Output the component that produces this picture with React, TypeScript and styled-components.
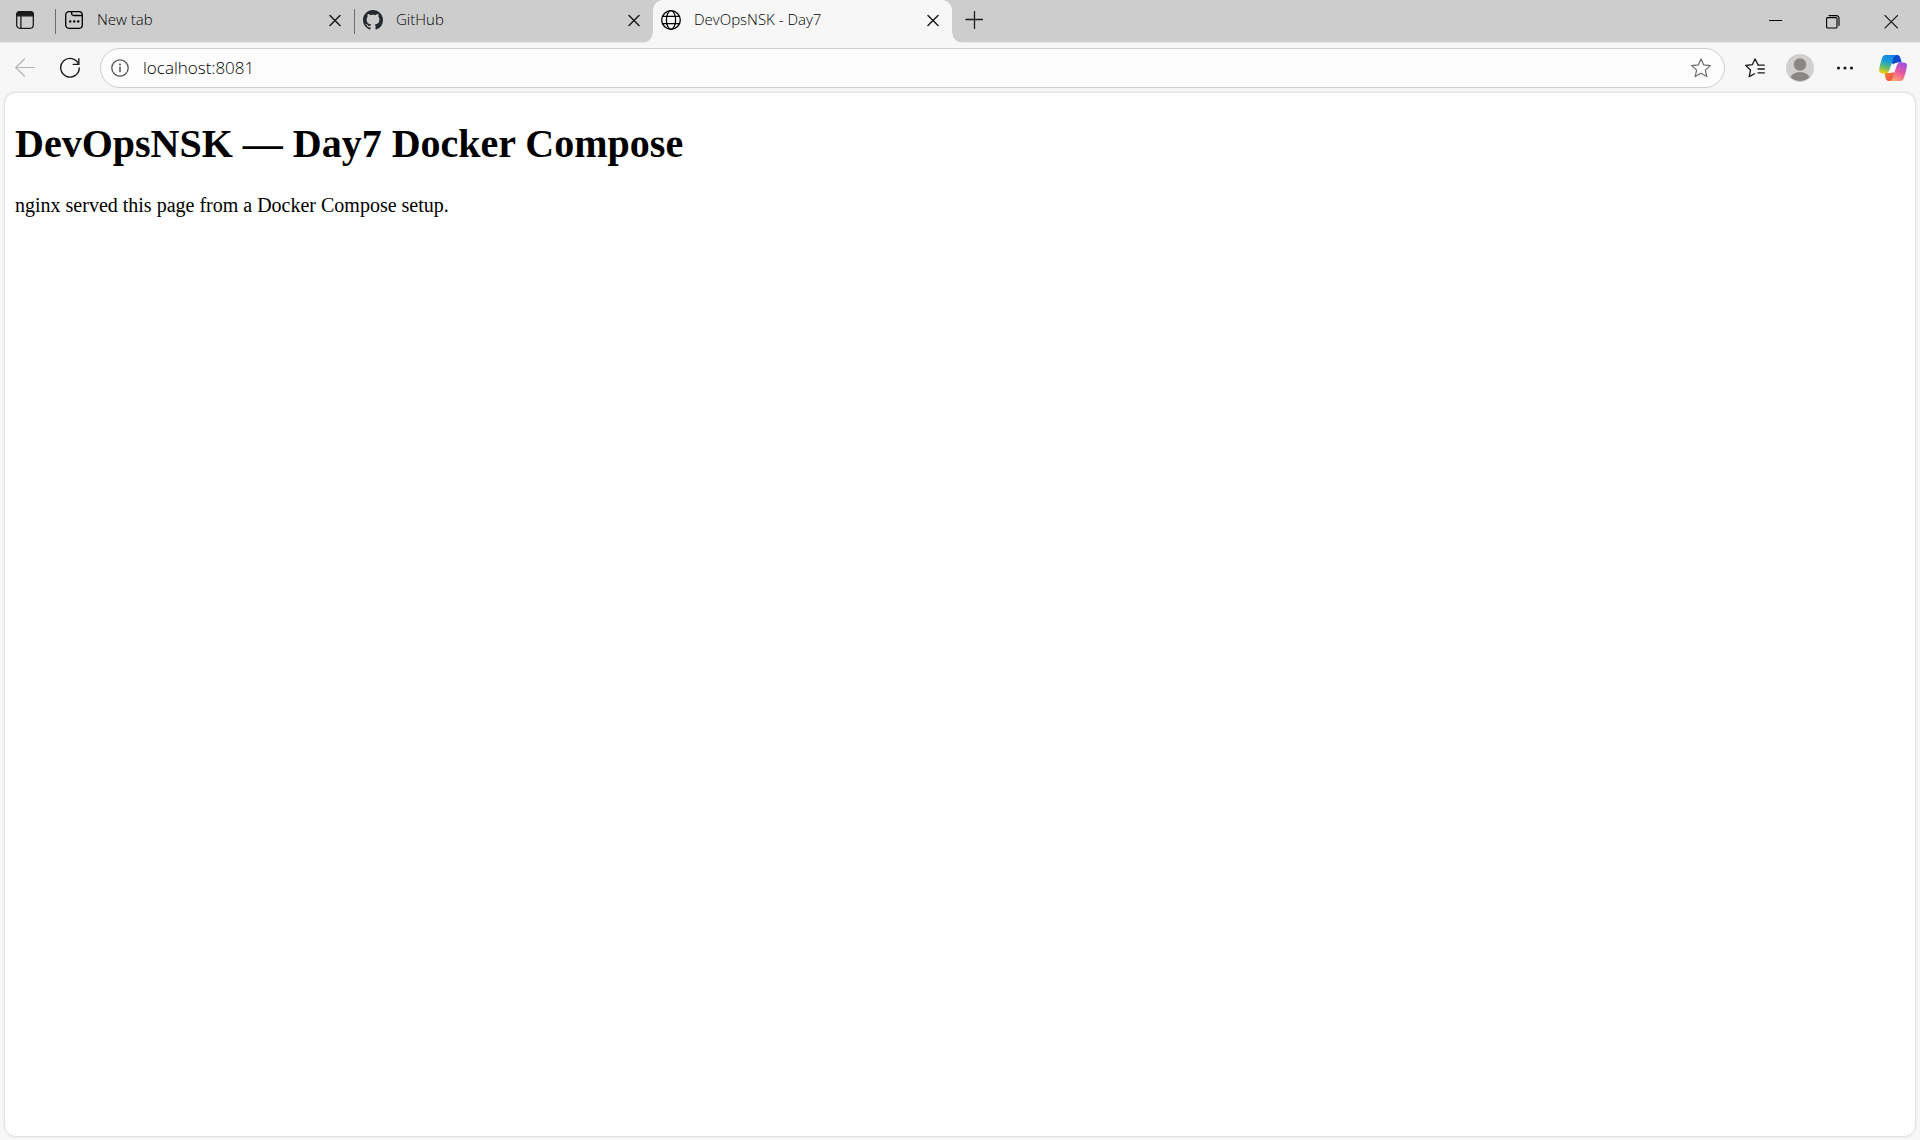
import React from "react";
import styled, { createGlobalStyle, css } from "styled-components";

const GlobalStyle = createGlobalStyle`
  * { box-sizing: border-box; }
  body {
    margin: 0;
    background: #f7f7f7;
    color: #000;
    font-family: "Open Sans", "Noto Sans", sans-serif;
    font-weight: 350;
  }
  button, input { font: inherit; color: inherit; margin: 0; padding: 0; border: 0; background: none; }
  svg { display: block; flex: none; }
`;

const Browser = styled.div`
  display: flex;
  flex-direction: column;
  min-height: 100vh;
`;

const TabStrip = styled.header`
  display: flex;
  height: 43px;
  background: #cdcdcd;
  border-bottom: 1px solid #e6e6e6;
`;

const IconButton = styled.button<{ $width: number; $color?: string }>`
  display: flex;
  flex: none;
  align-items: center;
  justify-content: center;
  width: ${(p) => p.$width}px;
  height: 40px;
  color: ${(p) => p.$color ?? "#1b1b1b"};
`;

const TabList = styled.nav`
  display: flex;
  min-width: 0;
  margin-left: 5px;
`;

const activeTab = css`
  z-index: 1;
  height: 43px;
  padding: 0 0 3px 8px;
  background: #f7f7f7;
  border-radius: 10px 10px 0 0;

  &::before,
  &::after {
    content: "";
    position: absolute;
    bottom: 0;
    width: 10px;
    height: 10px;
  }
  &::before {
    right: 100%;
    background: radial-gradient(circle at 0 0, transparent 9px, #f7f7f7 10px);
  }
  &::after {
    left: 100%;
    background: radial-gradient(circle at 100% 0, transparent 9px, #f7f7f7 10px);
  }
`;

const inactiveTab = css`
  height: 40px;
  padding-left: 9px;

  &::before {
    content: "";
    position: absolute;
    left: 0;
    top: 9px;
    width: 1px;
    height: 25px;
    background: #6e6e6e;
  }
`;

const Tab = styled.div<{ $active?: boolean }>`
  position: relative;
  display: flex;
  align-items: center;
  width: 299px;
  min-width: 0;
  ${(p) => (p.$active ? activeTab : inactiveTab)}
`;

const TabTitle = styled.button`
  display: flex;
  flex: 1;
  align-items: center;
  gap: 13px;
  min-width: 0;
  height: 40px;
  text-align: left;
`;

const TabText = styled.span`
  padding-bottom: 2px;
  font-size: 15px;
  line-height: 20px;
  white-space: nowrap;
`;

const WindowControls = styled.div`
  display: flex;
  align-items: flex-end;
  margin-left: auto;
`;

const Toolbar = styled.div`
  display: flex;
  align-items: center;
  height: 50px;
  padding: 0 2px;
`;

const AddressBar = styled.form`
  display: flex;
  flex: 1;
  align-items: center;
  height: 40px;
  margin: 0 7px 0 8px;
  background: #fdfdfd;
  border: 1px solid #cdcdcd;
  border-radius: 20px;
`;

const AddressLabel = styled.label`
  display: flex;
  flex: 1;
  align-items: center;
  gap: 14px;
  padding-left: 10px;
  color: #555;
`;

const AddressInput = styled.input`
  flex: 1;
  min-width: 0;
  height: 30px;
  padding-bottom: 2px;
  color: #000;
  font-size: 17px;
  outline: none;
`;

const Page = styled.main`
  flex: 1;
  margin: 0 5px 4px;
  padding: 1px 10px;
  background: #fff;
  border-radius: 10px;
  box-shadow: 0 0 3px rgba(0, 0, 0, 0.24);
  font-family: "Liberation Serif", serif;
  font-weight: 400;
`;

const Heading = styled.h1`
  margin: 27px 0;
  font-size: 40px;
  line-height: 46px;
`;

const Paragraph = styled.p`
  margin: 0;
  font-size: 20px;
  line-height: 23px;
`;

const line = { fill: "none", stroke: "currentColor", strokeLinecap: "round", strokeLinejoin: "round" } as const;

const TabActionsIcon = () => (
  <svg width="20" height="20" viewBox="0 0 20 20" {...line} strokeWidth="1.3">
    <rect x="1.7" y="1.7" width="16.6" height="16.6" rx="3.2" />
    <path d="M1.7 5.8V4.6a2.9 2.9 0 0 1 2.9-2.9h10.8a2.9 2.9 0 0 1 2.9 2.9v1.2z" fill="currentColor" />
    <path d="M5.9 6v12" />
  </svg>
);

const NewTabIcon = () => (
  <svg width="20" height="20" viewBox="0 0 20 20" {...line} strokeWidth="1.3">
    <rect x="1.7" y="1.7" width="16.6" height="16.6" rx="3.2" />
    <path d="M7.6 1.7v1.8a2 2 0 0 0 2 2h8.4" />
    <g fill="currentColor" stroke="none">
      <circle cx="6.2" cy="11.4" r="1.2" />
      <circle cx="10.2" cy="11.4" r="1.2" />
      <circle cx="14.2" cy="11.4" r="1.2" />
    </g>
  </svg>
);

const GitHubIcon = () => (
  <svg width="20" height="20" viewBox="0 0 16 16" fill="#24292f">
    <path d="M8 0C3.58 0 0 3.58 0 8c0 3.54 2.29 6.53 5.47 7.59.4.07.55-.17.55-.38 0-.19-.01-.82-.01-1.49-2.01.37-2.53-.49-2.69-.94-.09-.23-.48-.94-.82-1.13-.28-.15-.68-.52-.01-.53.63-.01 1.08.58 1.23.82.72 1.21 1.87.87 2.33.66.07-.52.28-.87.51-1.07-1.78-.2-3.64-.89-3.64-3.95 0-.87.31-1.59.82-2.15-.08-.2-.36-1.02.08-2.12 0 0 .67-.21 2.2.82.64-.18 1.32-.27 2-.27s1.36.09 2 .27c1.53-1.04 2.2-.82 2.2-.82.44 1.1.16 1.92.08 2.12.51.56.82 1.27.82 2.15 0 3.07-1.87 3.75-3.65 3.95.29.25.54.73.54 1.48 0 1.07-.01 1.93-.01 2.2 0 .21.15.46.55.38A8.01 8.01 0 0 0 16 8c0-4.42-3.58-8-8-8z" />
  </svg>
);

const GlobeIcon = () => (
  <svg width="20" height="20" viewBox="0 0 20 20" {...line} strokeWidth="1.3">
    <circle cx="10" cy="10" r="9.3" />
    <ellipse cx="10" cy="10" rx="4.6" ry="9.3" />
    <path d="M1.5 6.3h17M1.5 13.7h17" />
  </svg>
);

const CloseIcon = () => (
  <svg width="12" height="14" viewBox="0 0 12 14" {...line} strokeWidth="1.5">
    <path d="M1 2.5l10 10M11 2.5l-10 10" />
  </svg>
);

const PlusIcon = () => (
  <svg width="18" height="18" viewBox="0 0 18 18" {...line} strokeWidth="1.3">
    <path d="M9.5 .5v17M1 8.5h17" />
  </svg>
);

const MinimizeIcon = () => (
  <svg width="14" height="14" viewBox="0 0 14 14" stroke="currentColor">
    <path d="M1 5.5h13" />
  </svg>
);

const RestoreIcon = () => (
  <svg width="14" height="14" viewBox="0 0 14 14" {...line} strokeWidth="1.1">
    <rect x="0.6" y="2.6" width="10.4" height="10.4" rx="1" />
    <path d="M3 .6h7.5a2.5 2.5 0 0 1 2.5 2.5v7.4" />
  </svg>
);

const WindowCloseIcon = () => (
  <svg width="14" height="14" viewBox="0 0 14 14" {...line} strokeWidth="1.1">
    <path d="M1 .5l12.5 12.5M13.5 .5L1 13" />
  </svg>
);

const BackIcon = () => (
  <svg width="20" height="20" viewBox="0 0 20 20" {...line} strokeWidth="1.2">
    <path d="M19.3 9.5H.8M9.3 1L.8 9.5 9.3 18" />
  </svg>
);

const ReloadIcon = () => (
  <svg width="22" height="22" viewBox="0 0 22 22" {...line} strokeWidth="1.4">
    <path d="M19.6 7.2A9.3 9.3 0 1 0 20.3 11" />
    <path d="M19.8 1.8v5.6h-5.6" />
  </svg>
);

const InfoIcon = () => (
  <svg width="18" height="18" viewBox="0 0 18 18" {...line} strokeWidth="1.3">
    <circle cx="9" cy="9" r="8.2" />
    <path d="M9 8.2v4.3" strokeWidth="1.5" />
    <circle cx="9" cy="5.6" r="1" fill="currentColor" stroke="none" />
  </svg>
);

const StarIcon = () => (
  <svg width="20" height="20" viewBox="0 0 20 20" {...line} strokeWidth="1.2">
    <path d="M10 .9l2.7 6 6.6.7-4.9 4.5 1.4 6.5-5.8-3.3-5.8 3.3 1.4-6.5L.7 7.6l6.6-.7z" />
  </svg>
);

const FavoritesIcon = () => (
  <svg width="20" height="20" viewBox="0 0 20 20" {...line} strokeWidth="1.3">
    <path d="M13.1 6.7L10 .9 7.3 6.7l-6.600.8 4.800 4.500-1.300 6.600L9.600 15.700" />
    <path d="M13 7.200h6.400M13 11h6.400M13 14.800h6.400" />
  </svg>
);

const AvatarIcon = () => (
  <svg width="28" height="28" viewBox="0 0 28 28">
    <defs>
      <clipPath id="avatar-disc"><circle cx="14" cy="14" r="13" /></clipPath>
    </defs>
    <circle cx="14" cy="14" r="14" fill="#d2d0ce" />
    <circle cx="14" cy="10.5" r="6.2" fill="#8a8684" />
    <ellipse cx="14" cy="26" rx="10.3" ry="8" fill="#8a8684" clipPath="url(#avatar-disc)" />
  </svg>
);

const MoreIcon = () => (
  <svg width="18" height="6" viewBox="0 0 18 6" fill="currentColor">
    <circle cx="2.5" cy="3" r="1.6" />
    <circle cx="9" cy="3" r="1.6" />
    <circle cx="15.5" cy="3" r="1.6" />
  </svg>
);

const CopilotIcon = () => (
  <svg width="28" height="26" viewBox="0 0 28 26">
    <defs>
      <linearGradient id="cp-left" x1="0.6" y1="0" x2="0.35" y2="1">
        <stop offset="0" stopColor="#1584e8" />
        <stop offset="0.35" stopColor="#189fd8" />
        <stop offset="0.65" stopColor="#55b97b" />
        <stop offset="1" stopColor="#f3cd10" />
      </linearGradient>
      <linearGradient id="cp-right" x1="0.75" y1="0" x2="0.3" y2="1">
        <stop offset="0" stopColor="#9c50e8" />
        <stop offset="0.5" stopColor="#e9589e" />
        <stop offset="1" stopColor="#ffa66a" />
      </linearGradient>
      <linearGradient id="cp-top" x1="0" y1="0" x2="1" y2="1">
        <stop offset="0" stopColor="#0a4fd0" />
        <stop offset="1" stopColor="#1848c8" />
      </linearGradient>
      <linearGradient id="cp-bottom" x1="0" y1="0" x2="1" y2="1">
        <stop offset="0" stopColor="#f58b28" />
        <stop offset="1" stopColor="#ee4650" />
      </linearGradient>
    </defs>
    <path d="M14 0h4.4c1.6 0 2.400 1 2.800 2.400L22.800 7.600h-3.900c-2 0-3.200.8-3.900 2.800L12 7z" fill="url(#cp-top)" />
    <path d="M14 26H9.6c-1.6 0-2.4-1-2.8-2.4L5.4 18.100h3.8c2 0 3-.8 3.700-2.800L16 19z" fill="url(#cp-bottom)" />
    <path d="M6.4 0h11.1c-1.7.4-2.5 1.6-3.2 3.6l-3.2 9.4c-.7 2.2-1.7 5-3.8 5.4H3.9C.7 18.4-.4 16.8.2 13.8 1 9.8 2 6.2 3.1 3 3.8 1 4.8 0 6.4 0z" fill="url(#cp-left)" />
    <path d="M21.6 26H10.5c1.7-.4 2.5-1.6 3.2-3.6l3.4-10c.7-2.2 1.7-4.6 3.8-4.8h3.2c3.2 0 4.3 1.6 3.7 4.6-.8 4-1.8 7.6-2.9 10.8-.7 2-1.7 3-3.3 3z" fill="url(#cp-right)" />
    <path d="M14.6 8.8l3.4-.8c-1 1-1.6 2.4-2 3.8l-1.9 5.7-3.2.6c.8-.8 1.3-1.8 1.7-3z" fill="#fff" />
  </svg>
);

const tabs = [
  { title: "New tab", icon: <NewTabIcon /> },
  { title: "GitHub", icon: <GitHubIcon /> },
  { title: "DevOpsNSK - Day7", icon: <GlobeIcon />, active: true },
];

export default function App() {
  return (
    <>
      <GlobalStyle />
      <Browser>
        <TabStrip>
          <IconButton $width={50} aria-label="Tab actions"><TabActionsIcon /></IconButton>
          <TabList aria-label="Tabs">
            {tabs.map((tab) => (
              <Tab key={tab.title} $active={tab.active}>
                <TabTitle>
                  {tab.icon}
                  <TabText>{tab.title}</TabText>
                </TabTitle>
                <IconButton $width={38} aria-label={`Close ${tab.title}`}><CloseIcon /></IconButton>
              </Tab>
            ))}
          </TabList>
          <IconButton $width={44} aria-label="Open a new tab"><PlusIcon /></IconButton>
          <WindowControls>
            <IconButton $width={58} $color="#000" aria-label="Minimize"><MinimizeIcon /></IconButton>
            <IconButton $width={58} $color="#000" aria-label="Restore"><RestoreIcon /></IconButton>
            <IconButton $width={58} $color="#222" aria-label="Close window"><WindowCloseIcon /></IconButton>
          </WindowControls>
        </TabStrip>
        <Toolbar>
          <IconButton $width={45} $color="#b4b4b4" aria-label="Back"><BackIcon /></IconButton>
          <IconButton $width={45} aria-label="Refresh"><ReloadIcon /></IconButton>
          <AddressBar onSubmit={(e) => e.preventDefault()}>
            <AddressLabel>
              <InfoIcon />
              <AddressInput type="text" aria-label="Address" defaultValue="localhost:8081" />
            </AddressLabel>
            <IconButton type="button" $width={47} $color="#6a6a6a" aria-label="Add to favorites"><StarIcon /></IconButton>
          </AddressBar>
          <IconButton $width={45} aria-label="Favorites"><FavoritesIcon /></IconButton>
          <IconButton $width={45} aria-label="Profile"><AvatarIcon /></IconButton>
          <IconButton $width={45} aria-label="Settings and more"><MoreIcon /></IconButton>
          <IconButton $width={51} aria-label="Copilot"><CopilotIcon /></IconButton>
        </Toolbar>
        <Page>
          <Heading>DevOpsNSK — Day7 Docker Compose</Heading>
          <Paragraph>nginx served this page from a Docker Compose setup.</Paragraph>
        </Page>
      </Browser>
    </>
  );
}
